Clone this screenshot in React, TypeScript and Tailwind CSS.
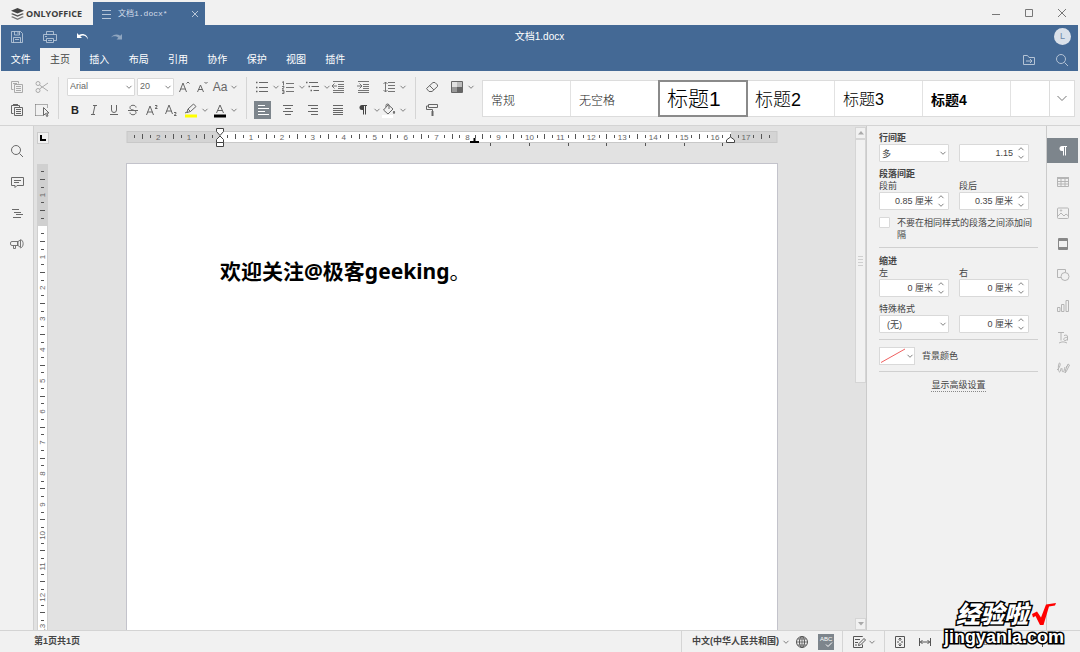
import type { ReactNode } from "react";

function Icon({ children, size = 16, className = "" }: { children: ReactNode; size?: number; className?: string }) {
  return (
    <svg
      width={size}
      height={size}
      viewBox={`0 0 ${size} ${size}`}
      fill="none"
      stroke="currentColor"
      strokeWidth="1"
      className={`shrink-0 ${className}`}
      aria-hidden="true"
    >
      {children}
    </svg>
  );
}

function Chevron({ className = "" }: { className?: string }) {
  return (
    <svg width="8" height="8" viewBox="0 0 8 8" fill="none" stroke="#808080" className={`shrink-0 ${className}`} aria-hidden="true">
      <path d="M1.500 2.800L4 5.300l2.500-2.500" />
    </svg>
  );
}

const icons = {
  save: (
    <Icon>
      <path d="M2.500 2.500h9l2 2v9h-11zM5.500 2.500v3.500h5v-3.500M4.500 13.500v-5h7v5M6 10.500h4M9 3v2" strokeWidth=".8" />
    </Icon>
  ),
  print: (
    <Icon>
      <path d="M4.500 5.500v-3h7v3M4.500 11.500h-3v-6h13v6h-3M4.500 9.500h7v4h-7zM6 11.500h4M3 7.500h2" strokeWidth=".8" />
    </Icon>
  ),
  undo: (
    <Icon>
      <path d="M2 4v5h5L5.300 7.300C8 5.500 11.500 7 13 10.500 12.800 6 8 3.500 3.900 6z" fill="currentColor" stroke="none" />
    </Icon>
  ),
  redo: (
    <Icon>
      <path d="M14 5v5.500H8.500l1.800-1.700C8 6.500 5 7 3 8.500 5 5.500 9 4.500 12.200 6.800z" fill="currentColor" stroke="none" />
    </Icon>
  ),
  folder: (
    <Icon>
      <path d="M2.500 12.500v-9h4l1.500 2h5.500v7zM5 9h6M9 7l2 2-2 2" />
    </Icon>
  ),
  search: (
    <Icon>
      <circle cx="7" cy="7" r="4.500" />
      <path d="M10.500 10.500l3.500 3.500" />
    </Icon>
  ),
  copy: (
    <Icon>
      <path d="M4.500 10.500h-2v-8h7v2M5.500 5.500h8v8h-8zM7 7.500h5M7 9.500h5M7 11.500h5M4 4.500h4" />
    </Icon>
  ),
  cut: (
    <Icon>
      <circle cx="4" cy="4.500" r="2" />
      <circle cx="4" cy="11.500" r="2" />
      <path d="M5.500 6L14 12M5.500 10L14 4" />
    </Icon>
  ),
  paste: (
    <Icon>
      <path d="M4.500 11.500h-2v-8h8v2M5.500 5.500h8v8h-8zM7 7.500h5M7 9.500h5M7 11.500h5" />
      <path d="M4 3h5" strokeWidth="2" />
    </Icon>
  ),
  selectArea: (
    <Icon>
      <path d="M1.500 2.500h12M1.500 13.500h7M1.500 2.500v11M13.500 2.500v4" strokeDasharray="1 1" />
      <path d="M9.500 5.500v8l2-2 1.200 3 1.300-.6-1.300-2.900h2.300z" fill="#f1f1f1" />
    </Icon>
  ),
  bullets: (
    <Icon>
      <path d="M5 3.500h9M5 8.500h9M5 12.500h9" />
      <path d="M2 3.500h1.500M2 8.500h1.500M2 12.500h1.500" strokeWidth="1.500" />
    </Icon>
  ),
  numbers: (
    <Icon>
      <path d="M6 4.500h8M6 8.500h8M6 12.500h8M2 3.500l1.500-1v4M2 7.500h2v1l-2 1.500h2M2 11.500h2v3H2M2.500 13H4" strokeWidth=".9" />
    </Icon>
  ),
  multilevel: (
    <Icon>
      <path d="M4 3.500h9M6.500 7.500H14M8.500 11.500H14" />
      <path d="M1 3.500h1.500M3.500 7.500H5M5.500 11.500H7" strokeWidth="1.500" />
    </Icon>
  ),
  outdent: (
    <Icon>
      <path d="M3 2.500h11M8 5.500h6M8 7.500h6M8 9.500h6M3 11.500h11M3 13.500h11M2 7h5M4.500 4.500L2 7l2.500 2.500" strokeWidth=".9" />
    </Icon>
  ),
  indent: (
    <Icon>
      <path d="M3 2.500h11M8 5.500h6M8 7.500h6M8 9.500h6M3 11.500h11M3 13.500h11M2 7h5M4.500 4.500L7 7l-2.500 2.500" strokeWidth=".9" />
    </Icon>
  ),
  lineSpacing: (
    <Icon>
      <path d="M7 3.500h7M7 6.500h7M7 9.500h7M7 12.500h7M4.500 3v10M2.500 5l2-2 2 2M2.500 11l2 2 2-2" strokeWidth=".9" />
    </Icon>
  ),
  alignLeft: (
    <Icon>
      <path d="M3 3.500h7M3 6.500h11M3 9.500h7M3 12.500h11" />
    </Icon>
  ),
  alignCenter: (
    <Icon>
      <path d="M3 3.500h10M5 6.500h6M3 9.500h10M5 12.500h6" />
    </Icon>
  ),
  alignRight: (
    <Icon>
      <path d="M3 3.500h10M6 6.500h7M3 9.500h10M6 12.500h7" />
    </Icon>
  ),
  justify: (
    <Icon>
      <path d="M3 3.500h10M3 6.500h10M3 8.500h10M3 10.500h10M3 12.500h10" />
    </Icon>
  ),
  pilcrow: (
    <Icon>
      <path d="M7.500 3.500h4.500M8.500 3.500v9M10.500 3.500v9" />
      <path d="M8.500 3H7a2.500 2.500 0 000 5h1.500z" fill="currentColor" stroke="none" />
    </Icon>
  ),
  bucket: (
    <Icon>
      <path d="M7 3L2.500 8l4.500 4 5-5-5-4.500zM5 5V3.500a1.500 1.500 0 013 0V7" />
      <path d="M13 9c.8 1.200.8 2.500 0 2.500s-.8-1.300 0-2.500z" fill="currentColor" />
      <path d="M1 14.500h11" stroke="#fff" strokeWidth="3" />
    </Icon>
  ),
  eraser: (
    <Icon>
      <path d="M2.500 9.500l6.500-6h2l2.500 2.500v1.500l-5.500 5h-3zM5.500 6.500l4.500 4.500" />
    </Icon>
  ),
  shading: (
    <Icon>
      <path d="M3 3h5v5H3z" fill="#e2e2e2" stroke="none" />
      <path d="M3 8h5v5H3z" fill="#999" stroke="none" />
      <path d="M8 3h5v5H8z" fill="#bdbdbd" stroke="none" />
      <path d="M8 8h5v5H8z" fill="#666" stroke="none" />
      <path d="M2.500 2.500h11v11h-11z" />
    </Icon>
  ),
  roller: (
    <Icon>
      <path d="M4.500 2.500h9v3h-9zM4.500 4h-2v3.500h6v2" />
      <path d="M8.500 9v5" strokeWidth="2" />
    </Icon>
  ),
  highlight: (
    <Icon>
      <path d="M4 10.500l1-3.500 5.500-5 2.500 2.500-5.500 5zM5 7l2.500 2.500M2 11l2-1" />
      <path d="M2 14h12" stroke="#ffff00" strokeWidth="3" />
    </Icon>
  ),
  comment: (
    <Icon>
      <path d="M2.500 3.500h12v8H8l-2 2v-2H2.500zM5 6.500h7M5 8.500h5" />
    </Icon>
  ),
  headings: (
    <Icon>
      <path d="M3 4.500h7M5 7.500h7M7 9.500h7M4 12.500h8" />
    </Icon>
  ),
  megaphone: (
    <Icon>
      <path d="M9 5.500H3a1.500 1.500 0 00-1.500 1.500v1A1.500 1.500 0 003 9.500h6M9 5.500L11.500 4v7.500L9 9.500zM4.500 9.500v3h2v-3" strokeWidth=".9" />
      <path d="M11.500 3.500c3.500 1 3.500 7.500 0 8.500M8.500 5.500v4" strokeWidth=".9" />
    </Icon>
  ),
  table: (
    <Icon>
      <path d="M2.500 4.500h11v8h-11zM2.500 7.500h11M2.500 10h11M6 4.500v8M10 4.500v8" />
      <path d="M2 4h12" strokeWidth="2" />
    </Icon>
  ),
  image: (
    <Icon>
      <rect x="2.500" y="3" width="11" height="10.500" rx="1" />
      <path d="M3 11l3-3 3 3 2-2 2.500 2" />
      <circle cx="6" cy="5.500" r=".7" />
    </Icon>
  ),
  headerFooter: (
    <Icon>
      <path d="M3.500 2.500h9v11h-9zM4 4.500h8M4 11.500h8" />
      <path d="M4 3.500h8M4 12.500h8" />
    </Icon>
  ),
  shape: (
    <Icon>
      <path d="M6 10.500H2.500v-8h8V5" />
      <circle cx="10" cy="9.500" r="4" />
    </Icon>
  ),
  chart: (
    <Icon>
      <path d="M2.500 9.500h2.500v4h-2.500zM6.500 6.500h2.500v7H6.500zM11 2.500h2.500v11H11z" />
    </Icon>
  ),
  textArt: (
    <Icon>
      <path d="M3 3.500h6M6 3.500v8M4 14c3-1.500 5-1.500 8 0" />
      <path d="M9 6.500c3-1 3.500 0 3.500 1.500v3.500M12.500 8.500c-4.500-.5-4.500 3-2.500 3 1.500 0 2.500-1 2.500-2" />
    </Icon>
  ),
  signature: (
    <Icon>
      <path d="M2 10c3-2 4-7 2.500-7S3 12 4.500 12s1-4 2-4 0 4 1.500 4 1-3 2-5M10 13l.5-3L13 4l1.500 1-3 6zM11 7l2-2" />
    </Icon>
  ),
  globe: (
    <Icon>
      <circle cx="8" cy="8" r="5.500" />
      <ellipse cx="8" cy="8" rx="2.500" ry="5.500" />
      <path d="M2.500 8h11M3.500 5h9M3.500 11h9M8 2.500v11" strokeWidth=".8" />
    </Icon>
  ),
  track: (
    <Icon>
      <path d="M11.500 3V2.500h-9v11h9v-3M4 5.500h5M4 8.500h3M4 11h2M7.500 11.500l.5-2 5-5 1.500 1.500-5 5z" />
    </Icon>
  ),
  fitPage: (
    <Icon>
      <path d="M5 2.500H3.500V5M11 2.500h1.500V5M5 13.500H3.500V11M11 13.500h1.500V11M3.500 5v6M12.500 5v6M5 2.500h6M5 13.500h6" />
      <path d="M8 4v3M8 9v3M6.500 5.500L8 4l1.500 1.500M6.500 10.500L8 12l1.500-1.500M5 8h2M9 8h2" />
    </Icon>
  ),
  fitWidth: (
    <Icon>
      <path d="M2.500 4v8M13.500 4v8M3 8h10M5.500 6l-2 2 2 2M10.500 6l2 2-2 2" />
    </Icon>
  ),
};

function Tool({ label, children, split, active }: { label: string; children: ReactNode; split?: boolean; active?: boolean }) {
  return (
    <button
      type="button"
      aria-label={label}
      className={`flex h-[18px] items-center ${active ? "w-[17px] justify-center bg-[#7d858c] text-white" : ""}`}
    >
      <span className="flex w-4 items-center justify-center text-[11px] leading-4">{children}</span>
      {split && <Chevron className="ml-0.5" />}
    </button>
  );
}

function Separator() {
  return <div className="w-px self-stretch bg-[#d5d5d5]" />;
}

function Select({ label, value }: { label: string; value: string }) {
  return (
    <div className="relative h-[18px] text-[9px]">
      <select
        aria-label={label}
        className="block h-full w-full appearance-none rounded-[1px] border border-[#d9d9d9] bg-white pl-0.5 pr-3 pt-px outline-none"
      >
        <option>{value}</option>
      </select>
      <Chevron className="pointer-events-none absolute right-0.5 top-[5px]" />
    </div>
  );
}

function Spinner({ label, value }: { label: string; value: string }) {
  return (
    <div className="flex h-[18px] rounded-[1px] border border-[#d9d9d9] bg-white">
      <input aria-label={label} defaultValue={value} className="w-full min-w-0 bg-transparent text-right text-[9px] outline-none" />
      <div className="flex w-[15px] shrink-0 flex-col items-center">
        <button type="button" aria-label={`${label} +`} className="h-2">
          <Chevron className="rotate-180" />
        </button>
        <button type="button" aria-label={`${label} -`} className="h-2">
          <Chevron />
        </button>
      </div>
    </div>
  );
}

const CM = 30.94;
const ORIGIN = 94;

function HorizontalRuler() {
  const marks: ReactNode[] = [];
  for (let q = -11; q <= 71; q++) {
    if (q === 0) continue;
    const x = ORIGIN + (q * CM) / 4;
    if (q % 4 === 0) {
      marks.push(
        <text key={q} x={x} y="13" fontSize="8" textAnchor="middle" fill="#666">
          {Math.abs(q / 4)}
        </text>,
      );
    } else {
      const half = q % 2 === 0;
      marks.push(<rect key={q} x={Math.round(x - 0.5)} y={half ? 7 : 8} width="1" height={half ? 5 : 3} fill="#555" />);
    }
  }
  return (
    <svg width="652" height="24" viewBox="0 0 652 24" className="shrink-0" aria-label="水平标尺">
      <rect x="1" y="4.500" width="650" height="11" fill="#d4d4d4" stroke="#c8c8c8" />
      <rect x="94" y="5" width="511" height="10" fill="#fff" />
      {marks}
      {[364, 403, 442, 480, 519, 558, 596].map((x) => (
        <rect key={x} x={x} y="16" width="1" height="3" fill="#555" />
      ))}
      <path d="M344 16h9v-2h-3.500v-3h-2v3H344z" fill="#000" />
      <g fill="#fff" stroke="#444">
        <path d="M90.500 1.500h7v3l-3.500 4-3.500-4z" />
        <path d="M90.500 15.500v-3l3.500-3.500 3.500 3.500v3z" />
        <path d="M90.500 15.500h7v4h-7z" />
        <path d="M600.500 15.500v-2.500l4-3 4 3v2.500z" />
      </g>
    </svg>
  );
}

function VerticalRuler() {
  const marks: ReactNode[] = [];
  for (let q = -7; q <= 52; q++) {
    if (q === 0) continue;
    const y = 62 + (q * CM) / 4;
    if (q % 4 === 0) {
      marks.push(
        <text key={q} transform={`translate(8 ${y}) rotate(-90)`} fontSize="8" textAnchor="middle" fill="#666">
          {Math.abs(q / 4)}
        </text>,
      );
    } else {
      const half = q % 2 === 0;
      marks.push(<rect key={q} x={half ? 3 : 4} y={Math.round(y - 0.5)} width={half ? 5 : 3} height="1" fill="#555" />);
    }
  }
  return (
    <svg width="11" height="100%" className="min-h-0 flex-1 overflow-hidden" aria-label="垂直标尺">
      <rect width="11" height="100%" fill="#d0d0d0" />
      <rect x="1" y="62" width="9" height="100%" fill="#fff" />
      {marks}
    </svg>
  );
}

function TitleBar() {
  return (
    <div className="flex h-[25px] shrink-0">
      <div className="flex w-[93px] items-center gap-0.5 pl-[11px] pt-0.5">
        <svg width="13" height="12" viewBox="0 0 13 12" fill="#444" aria-hidden="true">
          <path d="M6.500 0L13 2.800 6.500 5.600 0 2.800z" />
          <path d="M1.500 5.200l5 2.100 5-2.100L13 5.900 6.500 8.700 0 5.900z" fill="#555" />
          <path d="M1.500 8.300l5 2.100 5-2.100 1.500.7L6.500 12 0 9z" fill="#777" />
        </svg>
        <span className="font-['Open_Sans',sans-serif] text-[9px] font-bold text-[#3d3d3d]">ONLYOFFICE</span>
      </div>
      <div className="mt-0.5 flex w-28 items-center bg-[#446995] pl-2 pr-1 text-[#d5deea]">
        <Icon size={12}>
          <path d="M1 2.500h9M1 6.500h9M1 10.500h9" strokeWidth=".8" />
        </Icon>
        <span className="ml-[5px] flex-1 whitespace-nowrap font-['Liberation_Mono','Noto_Sans_CJK_SC',monospace] text-[8px]">文档1.docx*</span>
        <button type="button" aria-label="关闭标签">
          <Icon size={12}>
            <path d="M3 3l6 6M9 3l-6 6" strokeWidth=".8" />
          </Icon>
        </button>
      </div>
      <div className="ml-auto flex pr-0.5 text-[#777]">
        <button type="button" aria-label="最小化" className="flex w-[33px] items-center justify-center">
          <Icon>
            <path d="M4 9.500h8" />
          </Icon>
        </button>
        <button type="button" aria-label="最大化" className="flex w-[33px] items-center justify-center">
          <Icon>
            <path d="M4.500 4.500h7v7h-7z" />
          </Icon>
        </button>
        <button type="button" aria-label="关闭" className="flex w-[33px] items-center justify-center">
          <Icon>
            <path d="M4 4l8 8M12 4l-8 8" />
          </Icon>
        </button>
      </div>
    </div>
  );
}

function Header() {
  const quick: [string, ReactNode, string][] = [
    ["保存", icons.save, "text-[#c3d0e0]"],
    ["打印", icons.print, "text-[#c3d0e0]"],
    ["撤销", icons.undo, "text-white"],
    ["重做", icons.redo, "text-[#8fa5bf]"],
  ];
  const tabs = ["文件", "主页", "插入", "布局", "引用", "协作", "保护", "视图", "插件"];
  return (
    <header className="ml-px mr-0.5 shrink-0 bg-[#446995] text-white">
      <div className="grid h-[23px] grid-cols-[1fr_auto_1fr] items-center">
        <div className="flex">
          {quick.map(([label, icon, color]) => (
            <button key={label} type="button" aria-label={label} className={`flex w-[33px] justify-center pr-px ${color}`}>
              {icon}
            </button>
          ))}
        </div>
        <h1 className="text-[10px]">文档1.docx</h1>
        <div className="flex justify-end pr-[7px]">
          <span className="flex size-[17px] items-center justify-center rounded-full bg-[#dae1ea] text-[9px] text-[#6c88aa]">L</span>
        </div>
      </div>
      <div className="flex h-[23px]">
        <nav className="grid w-[354px] grid-cols-9 text-[10px]">
          {tabs.map((tab) => (
            <button key={tab} type="button" className={tab === "主页" ? "bg-[#f1f1f1] text-[#444]" : ""}>
              {tab}
            </button>
          ))}
        </nav>
        <div className="ml-auto flex text-[#b4c3d5]">
          <button type="button" aria-label="打开文件位置" className="flex w-[33px] items-center justify-center">
            {icons.folder}
          </button>
          <button type="button" aria-label="查找" className="flex w-[33px] items-center justify-center">
            {icons.search}
          </button>
        </div>
      </div>
    </header>
  );
}

function Toolbar() {
  return (
    <div className="flex h-[55px] shrink-0 items-center border-b border-[#d4d4d4] text-[#666]">
      <div className="flex h-[42px] items-center">
        <div className="grid w-[58px] grid-cols-[25px_25px] gap-y-[5px] pl-[9px]">
          <span className="text-[#aaa]">
            <Tool label="复制">{icons.copy}</Tool>
          </span>
          <span className="text-[#aaa]">
            <Tool label="剪切">{icons.cut}</Tool>
          </span>
          <Tool label="粘贴">{icons.paste}</Tool>
          <Tool label="选择">{icons.selectArea}</Tool>
        </div>
        <Separator />
        <div className="flex w-[187px] flex-col gap-[5px] px-2">
          <div className="flex items-center gap-0.5">
            <div className="w-[68px] shrink-0">
              <Select label="字体" value="Arial" />
            </div>
            <div className="w-[37px] shrink-0">
              <Select label="字号" value="20" />
            </div>
            <Tool label="增大字号">
              <Icon>
                <path d="M3.500 13L7 4l3.500 9M4.500 10h5M10.500 4.500L12 3l1.500 1.500" />
              </Icon>
            </Tool>
            <Tool label="减小字号">
              <Icon>
                <path d="M3.500 13l3-7 3 7M4.500 10.500h4M10.500 3L12 4.500 13.500 3" />
              </Icon>
            </Tool>
            <Tool label="更改大小写" split>
              <span className="text-[12px]">Aa</span>
            </Tool>
          </div>
          <div className="flex items-center justify-between">
            <Tool label="粗体">
              <b className="text-[#222]">B</b>
            </Tool>
            <Tool label="斜体">
              <Icon>
                <path d="M7 3.500h4M5 12.500h4M9 3.500l-2 9" />
              </Icon>
            </Tool>
            <Tool label="下划线">
              <Icon>
                <path d="M5.500 3v5a2.500 2.500 0 005 0V3M4 12.500h8" />
              </Icon>
            </Tool>
            <Tool label="删除线">
              <Icon>
                <path d="M11 5.500c0-3-6-3-6 0 0 1.500 1 2 3 2.500s3 1.500 3 2.500c0 3-6 3-6 0M3 8.500h10" />
              </Icon>
            </Tool>
            <Tool label="上标">
              <Icon>
                <path d="M2.500 13L6 4l3.500 9M3.500 10h5M11 3.500h2v1.200L11 6.500h2.500" />
              </Icon>
            </Tool>
            <Tool label="下标">
              <Icon>
                <path d="M2.500 12L6 3l3.500 9M3.500 9h5M11 10.500h2v1.200L11 13.500h2.500" />
              </Icon>
            </Tool>
            <Tool label="突出显示颜色" split>
              {icons.highlight}
            </Tool>
            <Tool label="字体颜色" split>
              <Icon>
                <path d="M4.500 11L8 3l3.500 8M5.500 8.500h5" />
                <path d="M2 14h12" stroke="#000" strokeWidth="3" />
              </Icon>
            </Tool>
          </div>
        </div>
        <Separator />
        <div className="grid w-[168px] grid-cols-[26px_25px_25px_25px_26px_26px] gap-y-[5px] pl-[7px]">
          <Tool label="项目符号" split>{icons.bullets}</Tool>
          <Tool label="编号" split>{icons.numbers}</Tool>
          <Tool label="多级列表" split>{icons.multilevel}</Tool>
          <Tool label="减少缩进">{icons.outdent}</Tool>
          <Tool label="增加缩进">{icons.indent}</Tool>
          <Tool label="行间距" split>{icons.lineSpacing}</Tool>
          <Tool label="左对齐" active>{icons.alignLeft}</Tool>
          <Tool label="居中">{icons.alignCenter}</Tool>
          <Tool label="右对齐">{icons.alignRight}</Tool>
          <Tool label="两端对齐">{icons.justify}</Tool>
          <Tool label="不打印字符" split>
            <span className="text-[#444]">{icons.pilcrow}</span>
          </Tool>
          <Tool label="底纹" split>{icons.bucket}</Tool>
        </div>
        <Separator />
        <div className="grid w-[66px] grid-cols-[25px_25px] gap-y-[5px] pl-2">
          <Tool label="清除格式">{icons.eraser}</Tool>
          <Tool label="更改配色" split>{icons.shading}</Tool>
          <Tool label="复制格式">{icons.roller}</Tool>
        </div>
      </div>
      <div className="mr-[5px] flex h-[37px] min-w-0 flex-1 border border-[#dcdcdc] bg-white text-black">
        {[
          ["常规", "text-[12px] text-[#222] pt-1.5", ""],
          ["无空格", "text-[12px] text-[#222] pt-1.5", ""],
          ["标题1", "text-[21px]", "outline-2 -outline-offset-1 outline-[#8a8a8a]"],
          ["标题2", "text-[18px] pt-1", ""],
          ["标题3", "text-[16px] pt-1", ""],
          ["标题4", "text-[14px] font-bold pt-1", ""],
        ].map(([name, text, frame]) => (
          <button
            key={name}
            type="button"
            className={`flex w-[88px] shrink-0 items-center whitespace-nowrap border-r border-[#e2e2e2] pl-2 leading-none ${name === "标题4" ? "" : "font-light"} ${text} ${frame}`}
          >
            {name}
          </button>
        ))}
        <div className="flex-1 border-r border-[#dcdcdc]" />
        <button type="button" aria-label="更多样式" className="flex w-6 items-center justify-center text-[#777]">
          <Icon>
            <path d="M3.500 6L8 10.500 12.500 6" />
          </Icon>
        </button>
      </div>
    </div>
  );
}

function LeftBar() {
  const items: [string, ReactNode][] = [
    ["查找", icons.search],
    ["批注", icons.comment],
    ["标题", icons.headings],
    ["反馈与支持", icons.megaphone],
  ];
  return (
    <aside className="flex w-[33px] shrink-0 flex-col gap-1.5 pt-3 text-[#6a6a6a]">
      {items.map(([label, icon]) => (
        <button key={label} type="button" aria-label={label} className="flex h-[25px] items-center justify-center">
          {icon}
        </button>
      ))}
    </aside>
  );
}

function Scrollbar() {
  return (
    <div className="flex w-[11px] shrink-0 flex-col bg-[#e2e2e2] pt-px">
      <button type="button" aria-label="向上滚动" className="flex h-3 items-center justify-center border border-[#d5d5d5] bg-[#f1f1f1] text-[#aaa]">
        <svg width="6" height="4" viewBox="0 0 6 4" fill="currentColor" aria-hidden="true">
          <path d="M3 0l3 3.500H0z" />
        </svg>
      </button>
      <div className="flex min-h-0 flex-1 flex-col">
        <div className="flex h-[51%] items-center justify-center border border-[#d5d5d5] bg-[#f1f1f1] text-[#cfcfcf]">
          <svg width="5" height="10" viewBox="0 0 5 10" stroke="currentColor" aria-hidden="true">
            <path d="M0 .5h5M0 3.500h5M0 6.500h5M0 9.500h5" />
          </svg>
        </div>
      </div>
      <button type="button" aria-label="向下滚动" className="flex h-3 items-center justify-center border border-[#d5d5d5] bg-[#f1f1f1] text-[#aaa]">
        <svg width="6" height="4" viewBox="0 0 6 4" fill="currentColor" aria-hidden="true">
          <path d="M3 3.500L6 0H0z" />
        </svg>
      </button>
    </div>
  );
}

function Editor() {
  return (
    <main className="flex min-w-0 flex-1 border-l border-[#d0d0d0] bg-[#e2e2e2]">
      <div className="flex w-[15px] shrink-0 flex-col gap-5 pl-[3px] pt-1.5">
        <button type="button" aria-label="制表位" className="flex size-3 shrink-0 items-center justify-center border border-[#cbcbcb] bg-[#f1f1f1]">
          <svg width="6" height="6" viewBox="0 0 6 6" fill="none" stroke="#000" strokeWidth="2" aria-hidden="true">
            <path d="M1 0v5h5" />
          </svg>
        </button>
        <VerticalRuler />
      </div>
      <div className="flex min-w-0 flex-1 flex-col items-center overflow-hidden pt-px">
        <HorizontalRuler />
        <article className="mt-3 w-[652px] flex-1 border border-b-0 border-[#c3c3cb] bg-white px-[93px] pt-[93px]">
          <p className="whitespace-nowrap font-['Noto_Sans','Noto_Sans_CJK_SC',sans-serif] text-[21px] font-bold leading-7 text-black">
            欢迎关注@极客geeking<span className="font-normal">。</span>
          </p>
        </article>
      </div>
      <Scrollbar />
    </main>
  );
}

function RightPanel() {
  return (
    <section className="w-[180px] shrink-0 border-l border-[#cbcbcb] pl-3 pr-2 pt-1.5 text-[9px] leading-3">
      <h2 className="font-bold">行间距</h2>
      <div className="grid grid-cols-[70px_70px] gap-x-2.5">
        <Select label="行间距" value="多" />
        <Spinner label="行间距值" value="1.15" />
      </div>
      <h2 className="mt-1.5 font-bold">段落间距</h2>
      <div className="grid grid-cols-[70px_70px] gap-x-2.5">
        <span>段前</span>
        <span>段后</span>
        <Spinner label="段前" value="0.85 厘米" />
        <Spinner label="段后" value="0.35 厘米" />
      </div>
      <label className="mt-[7px] flex gap-[7px] pr-1">
        <input type="checkbox" className="size-[11px] shrink-0 appearance-none rounded-[1px] border border-[#d9d9d9] bg-white" />
        <span className="w-[136px]">不要在相同样式的段落之间添加间隔</span>
      </label>
      <hr className="mb-[7px] mt-1.5 border-[#d0d0d0]" />
      <h2 className="font-bold">缩进</h2>
      <div className="grid grid-cols-[70px_70px] gap-x-2.5">
        <span>左</span>
        <span>右</span>
        <Spinner label="左" value="0 厘米" />
        <Spinner label="右" value="0 厘米" />
      </div>
      <div className="mt-1.5">特殊格式</div>
      <div className="grid grid-cols-[70px_70px] gap-x-2.5">
        <Select label="特殊格式" value={"\u00a0\u00a0(无)"} />
        <Spinner label="特殊格式值" value="0 厘米" />
      </div>
      <hr className="mb-[7px] mt-1.5 border-[#d0d0d0]" />
      <div className="flex items-center gap-[7px]">
        <button type="button" aria-label="背景颜色" className="flex h-[18px] w-9 items-center border border-[#d9d9d9] bg-white">
          <svg width="26" height="16" viewBox="0 0 26 16" stroke="#f06060" aria-hidden="true">
            <path d="M1 14.500L25 1" />
          </svg>
          <Chevron />
        </button>
        <span>背景颜色</span>
      </div>
      <hr className="mb-[7px] mt-1.5 border-[#d0d0d0]" />
      <div className="text-center">
        <a href="#advanced" className="inline-block border-b border-dotted border-[#888]">
          显示高级设置
        </a>
      </div>
    </section>
  );
}

function RightBar() {
  const items: [string, ReactNode][] = [
    ["表格设置", icons.table],
    ["图像设置", icons.image],
    ["页眉页脚设置", icons.headerFooter],
    ["形状设置", icons.shape],
    ["图表设置", icons.chart],
    ["艺术字设置", icons.textArt],
    ["签名设置", icons.signature],
  ];
  return (
    <aside className="flex w-[34px] shrink-0 flex-col gap-1.5 border-l border-[#cbcbcb] pr-0.5 pt-3 text-[#b5b5b5]">
      <button type="button" aria-label="段落设置" className="flex h-[25px] items-center justify-center bg-[#7d858c] text-white">
        {icons.pilcrow}
      </button>
      {items.map(([label, icon]) => (
        <button
          key={label}
          type="button"
          aria-label={label}
          className={`flex h-[25px] items-center justify-center ${label === "页眉页脚设置" ? "text-[#888]" : ""}`}
        >
          {icon}
        </button>
      ))}
    </aside>
  );
}

function StatusBar() {
  return (
    <footer className="flex h-[22px] shrink-0 items-center border-t border-[#d4d4d4] text-[9px]">
      <span className="pl-[34px] font-bold">第1页共1页</span>
      <div className="ml-auto flex w-[399px] items-center self-stretch text-[#555]">
        <Separator />
        <button type="button" className="ml-2.5 flex items-center gap-[3px] font-bold text-[#444]">
          <span className="whitespace-nowrap">中文(中华人民共和国)</span>
          <Chevron />
        </button>
        <button type="button" aria-label="文档语言" className="ml-1">
          {icons.globe}
        </button>
        <button type="button" aria-label="拼写检查" className="ml-2 flex size-4 items-center justify-center bg-[#7d858c] text-white">
          <svg width="16" height="16" viewBox="0 0 16 16" fill="none" stroke="currentColor" aria-hidden="true">
            <text x="2" y="7" fontSize="6" fill="currentColor" stroke="none">ABC</text>
            <path d="M8 10.500l2 2 4-4" />
          </svg>
        </button>
        <div className="ml-2 flex self-stretch">
          <Separator />
        </div>
        <button type="button" aria-label="跟踪修订" className="ml-2 flex items-center gap-px">
          {icons.track}
          <Chevron />
        </button>
        <div className="ml-2 flex self-stretch">
          <Separator />
        </div>
        <button type="button" aria-label="适合页面" className="ml-[7px]">
          {icons.fitPage}
        </button>
        <button type="button" aria-label="适合宽度" className="ml-[9px]">
          {icons.fitWidth}
        </button>
        <button type="button" aria-label="缩小" className="ml-[10px]">
          <Icon>
            <path d="M4 8.500h8" />
          </Icon>
        </button>
        <span className="ml-5 whitespace-nowrap">缩放100%</span>
        <button type="button" aria-label="放大" className="ml-[14px]">
          <Icon>
            <path d="M4 8.500h8M8.500 4v9" />
          </Icon>
        </button>
      </div>
    </footer>
  );
}

function Watermark() {
  return (
    <div className="pointer-events-none absolute bottom-[5px] right-4 text-white [-webkit-text-stroke:3px_#000] [paint-order:stroke_fill]">
      <div className="flex items-center gap-1 pl-3">
        <span className="text-[24px] font-black italic leading-6">经验啦</span>
        <svg width="24" height="24" viewBox="0 0 24 24" fill="#f00" aria-hidden="true">
          <path d="M0 11l5-2.500 4 6L14 1.500 24 0l-1 2.500-6 1L11.500 22H8L3.500 13l-2.500 1.500z" />
        </svg>
      </div>
      <div className="text-[18px] font-bold leading-5">jingyanla.com</div>
    </div>
  );
}

export default function App() {
  return (
    <div className="relative flex h-screen flex-col overflow-hidden bg-[#f1f1f1] font-['Liberation_Sans','Noto_Sans_CJK_SC',sans-serif] text-[#444]">
      <TitleBar />
      <Header />
      <Toolbar />
      <div className="flex min-h-0 flex-1">
        <LeftBar />
        <Editor />
        <RightPanel />
        <RightBar />
      </div>
      <StatusBar />
      <Watermark />
    </div>
  );
}
